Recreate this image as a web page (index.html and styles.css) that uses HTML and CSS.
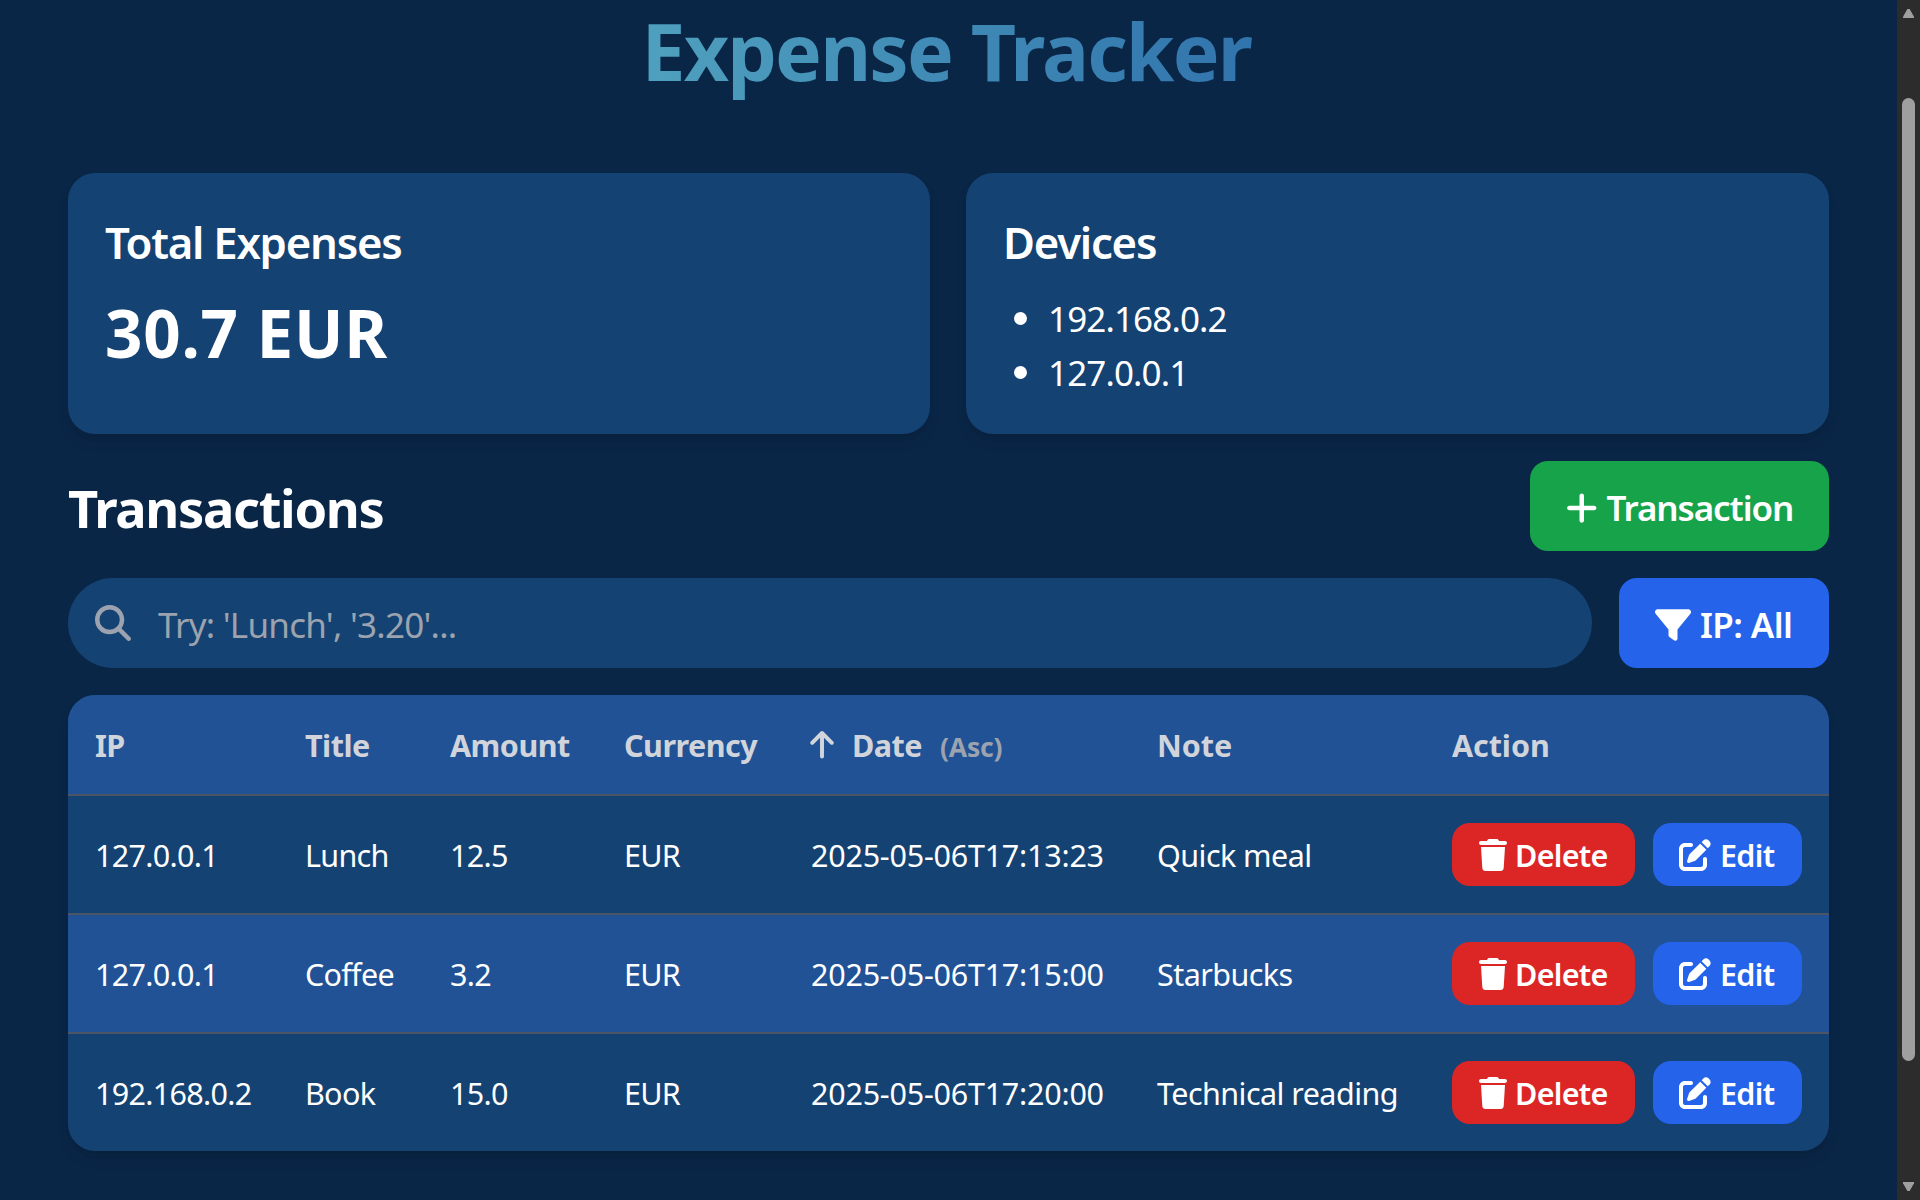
FILE: index.html
```html
<!DOCTYPE html>
<html lang="en">
<head>
    <meta charset="utf-8">
    <title>Expense Tracker</title>
    <meta name="viewport" content="width=device-width,initial-scale=1">
    <link rel="stylesheet" href="styles.css">
</head>
<body>
<!-- Icons -->
<svg class="sprite" width="0" height="0">
    <symbol id="plus" viewBox="0 0 448 512"><path d="M256 80c0-17.7-14.3-32-32-32s-32 14.3-32 32V224H48c-17.7 0-32 14.3-32 32s14.3 32 32 32H192V432c0 17.7 14.3 32 32 32s32-14.3 32-32V288H400c17.7 0 32-14.3 32-32s-14.3-32-32-32H256V80z"/></symbol>
    <symbol id="search" viewBox="0 0 512 512"><path d="M416 208c0 45.9-14.9 88.3-40 122.7L502.6 457.4c12.5 12.5 12.5 32.8 0 45.3s-32.8 12.5-45.3 0L330.7 376c-34.4 25.2-76.8 40-122.7 40C93.1 416 0 322.9 0 208S93.1 0 208 0S416 93.1 416 208zM208 352a144 144 0 1 0 0-288 144 144 0 1 0 0 288z"/></symbol>
    <symbol id="filter" viewBox="0 0 512 512"><path d="M3.9 54.9C10.5 40.9 24.5 32 40 32H472c15.5 0 29.5 8.9 36.1 22.9s4.6 30.5-5.2 42.5L320 320.9V448c0 12.1-6.8 23.2-17.7 28.6s-23.8 4.3-33.5-3l-64-48c-8.1-6-12.8-15.5-12.8-25.6V320.9L9 97.3C-.7 85.4-2.8 68.8 3.9 54.9z"/></symbol>
    <symbol id="arrow-up" viewBox="0 0 384 512"><path d="M214.6 41.4c-12.5-12.5-32.8-12.5-45.3 0l-160 160c-12.5 12.5-12.5 32.8 0 45.3s32.8 12.5 45.3 0L160 141.2V448c0 17.7 14.3 32 32 32s32-14.3 32-32V141.2L329.4 246.6c12.5 12.5 32.8 12.5 45.3 0s12.5-32.8 0-45.3l-160-160z"/></symbol>
    <symbol id="trash" viewBox="0 0 448 512"><path d="M135.2 17.7L128 32H32C14.3 32 0 46.3 0 64S14.3 96 32 96H416c17.7 0 32-14.3 32-32s-14.3-32-32-32H320l-7.2-14.3C307.4 6.8 296.3 0 284.2 0H163.8c-12.1 0-23.2 6.8-28.6 17.7zM416 128H32L53.2 467c1.6 25.3 22.6 45 47.9 45H346.9c25.3 0 46.3-19.7 47.9-45L416 128z"/></symbol>
    <symbol id="edit" viewBox="0 0 512 512"><path d="M471.6 21.7c-21.9-21.9-57.3-21.9-79.2 0L362.3 51.7l97.9 97.9 30.1-30.1c21.9-21.9 21.9-57.3 0-79.2L471.6 21.7zm-299.2 220c-6.1 6.1-10.8 13.6-13.5 21.9l-29.6 88.8c-2.9 8.6-.6 18.1 5.8 24.6s15.9 8.7 24.6 5.8l88.8-29.6c8.2-2.7 15.7-7.4 21.9-13.5L437.7 172.3 339.7 74.3 172.4 241.7zM96 64C43 64 0 107 0 160V416c0 53 43 96 96 96H352c53 0 96-43 96-96V320c0-17.7-14.3-32-32-32s-32 14.3-32 32v96c0 17.7-14.3 32-32 32H96c-17.7 0-32-14.3-32-32V160c0-17.7 14.3-32 32-32h96c17.7 0 32-14.3 32-32s-14.3-32-32-32H96z"/></symbol>
</svg>

<main class="container">
    <h1 class="page-title">Expense Tracker</h1>

    <div class="cards">
        <section class="card">
            <h2 class="card-title">Total Expenses</h2>
            <p class="total">30.7 EUR</p>
        </section>
        <section class="card">
            <h2 class="card-title">Devices</h2>
            <ul class="devices">
                <li>192.168.0.2</li>
                <li>127.0.0.1</li>
            </ul>
        </section>
    </div>

    <div class="section-head">
        <h2 class="section-title">Transactions</h2>
        <button class="btn btn-add"><svg class="icon icon-plus"><use href="#plus"/></svg>Transaction</button>
    </div>

    <div class="search-row">
        <div class="search">
            <svg class="icon"><use href="#search"/></svg>
            <input type="text" placeholder="Try: 'Lunch', '3.20'...">
        </div>
        <button class="btn btn-filter"><svg class="icon"><use href="#filter"/></svg>IP: All</button>
    </div>

    <table class="transactions">
        <colgroup>
            <col class="col-ip"><col class="col-title"><col class="col-amount"><col class="col-currency"><col class="col-date"><col class="col-note"><col>
        </colgroup>
        <thead>
            <tr>
                <th>IP</th>
                <th>Title</th>
                <th>Amount</th>
                <th>Currency</th>
                <th><div class="sort"><svg class="icon icon-arrow"><use href="#arrow-up"/></svg><span>Date</span><span class="order">(Asc)</span></div></th>
                <th class="wide">Note</th>
                <th class="wide">Action</th>
            </tr>
        </thead>
        <tbody>
            <tr>
                <td>127.0.0.1</td>
                <td>Lunch</td>
                <td>12.5</td>
                <td>EUR</td>
                <td class="date">2025-05-06T17:13:23</td>
                <td>Quick meal</td>
                <td>
                    <div class="actions">
                        <button class="btn-sm btn-delete"><svg class="icon icon-trash"><use href="#trash"/></svg>Delete</button>
                        <button class="btn-sm btn-edit"><svg class="icon"><use href="#edit"/></svg>Edit</button>
                    </div>
                </td>
            </tr>
            <tr>
                <td>127.0.0.1</td>
                <td>Coffee</td>
                <td>3.2</td>
                <td>EUR</td>
                <td class="date">2025-05-06T17:15:00</td>
                <td>Starbucks</td>
                <td>
                    <div class="actions">
                        <button class="btn-sm btn-delete"><svg class="icon icon-trash"><use href="#trash"/></svg>Delete</button>
                        <button class="btn-sm btn-edit"><svg class="icon"><use href="#edit"/></svg>Edit</button>
                    </div>
                </td>
            </tr>
            <tr>
                <td>192.168.0.2</td>
                <td>Book</td>
                <td>15.0</td>
                <td>EUR</td>
                <td class="date">2025-05-06T17:20:00</td>
                <td>Technical reading</td>
                <td>
                    <div class="actions">
                        <button class="btn-sm btn-delete"><svg class="icon icon-trash"><use href="#trash"/></svg>Delete</button>
                        <button class="btn-sm btn-edit"><svg class="icon"><use href="#edit"/></svg>Edit</button>
                    </div>
                </td>
            </tr>
        </tbody>
    </table>
</main>

<!-- Scrollbar -->
<div class="scrollbar">
    <div class="arrow arrow-top"></div>
    <div class="track"><div class="thumb"></div></div>
    <div class="arrow arrow-bottom"></div>
</div>
</body>
</html>
```
FILE: styles.css
```css
* {
    box-sizing: border-box;
    margin: 0;
    padding: 0;
}

body {
    display: flex;
    height: 1200px;
    overflow: hidden;
    background: #0a2647;
    color: #fff;
    font-family: "Segoe UI", "Noto Sans", sans-serif;
}

button,
input {
    border: 0;
    font: inherit;
    color: inherit;
}

.sprite {
    display: none;
}

.icon {
    flex: none;
    width: 36px;
    height: 36px;
    fill: currentColor;
}

.container {
    flex: 1;
    padding: 0 68px;
}

.page-title {
    width: 614px;
    margin: 0 auto 59px;
    white-space: nowrap;
    font-size: 78.6px;
    line-height: 102px;
    padding-bottom: 12px;
    letter-spacing: -1.85px;
    background: linear-gradient(to right, #4fa0be, #3174ad);
    background-clip: text;
    -webkit-background-clip: text;
    color: transparent;
}

/* Cards */
.cards {
    display: grid;
    grid-template-columns: 862px 1fr;
    gap: 36px;
    margin-bottom: 27px;
}

.card {
    height: 261px;
    padding: 37px 37px 36px;
    border-radius: 27px;
    background: #144272;
    box-shadow: 0 9px 14px -2px rgba(0, 0, 0, 0.1), 0 5px 9px -5px rgba(0, 0, 0, 0.1);
}

.card-title {
    margin-bottom: 17px;
    font-size: 43.7px;
    font-weight: 600;
    line-height: 65px;
    letter-spacing: -1.25px;
}

.total {
    font-size: 65.5px;
    font-weight: 700;
    line-height: 81px;
    letter-spacing: 0.73px;
}

.devices {
    list-style: none;
    font-size: 35px;
    line-height: 54px;
    letter-spacing: -0.87px;
}

.devices li {
    display: flex;
    align-items: center;
    padding-left: 11px;
}

.devices li::before {
    content: "";
    width: 13px;
    height: 13px;
    margin: 0 21px 2px 0;
    border-radius: 50%;
    background: #fff;
}

/* Transactions header */
.section-head,
.search-row {
    display: flex;
    justify-content: space-between;
    height: 90px;
    margin-bottom: 27px;
}

.section-title {
    padding-top: 2px;
    font-size: 52.4px;
    line-height: 90px;
    letter-spacing: -1.35px;
}

.btn {
    display: flex;
    align-items: center;
    gap: 9px;
    height: 90px;
    padding: 3px 0 0 36px;
    border-radius: 18px;
    white-space: nowrap;
    font-size: 35px;
    font-weight: 600;
}

.btn-add {
    width: 299px;
    background: #16a34a;
    letter-spacing: -1.1px;
}

.btn-filter {
    width: 210px;
    background: #2563eb;
    letter-spacing: -0.6px;
}

.icon-plus {
    width: 31.5px;
}

.search-row {
    gap: 27px;
}

.search {
    display: flex;
    flex: 1;
    align-items: center;
    gap: 27px;
    padding-left: 27px;
    border-radius: 45px;
    background: #144272;
    color: #9ca3af;
}

.search input {
    flex: 1;
    height: 90px;
    padding-top: 3px;
    background: none;
    font-size: 35px;
    letter-spacing: -0.75px;
}

.search input::placeholder {
    color: #9ca3af;
}

/* Table */
.transactions {
    width: 100%;
    table-layout: fixed;
    border-spacing: 0;
    border-radius: 27px;
    overflow: hidden;
    background: #144272;
    font-size: 30.5px;
    letter-spacing: -0.7px;
    text-align: left;
    white-space: nowrap;
    box-shadow: 0 9px 14px -2px rgba(0, 0, 0, 0.1), 0 5px 9px -5px rgba(0, 0, 0, 0.1);
}

.col-ip { width: 210px; }
.col-title { width: 145px; }
.col-amount { width: 174px; }
.col-currency { width: 186px; }
.col-date { width: 347px; }
.col-note { width: 295px; }

.transactions th,
.transactions td {
    padding: 0 0 0 27px;
}

.transactions th {
    height: 101px;
    border-bottom: 2px solid #4b5563;
    background: #205295;
    color: #d1d5db;
    letter-spacing: -0.5px;
}

.transactions th.wide {
    letter-spacing: -0.07px;
}

.transactions td {
    height: 119px;
    border-bottom: 2px solid #4b5563;
}

.transactions tr:last-child td {
    height: 117px;
    border-bottom: 0;
}

.transactions tbody tr:nth-child(even) {
    background: #205295;
}

.transactions td:nth-child(6) {
    letter-spacing: -0.55px;
}

.transactions td.date {
    padding-left: 28px;
    letter-spacing: -0.23px;
}

.sort {
    display: flex;
    align-items: center;
}

.sort .icon-arrow {
    width: 24px;
    height: 31.5px;
    margin-right: 18px;
}

.sort .order {
    margin: 4px 0 0 18px;
    font-size: 26.5px;
    font-weight: 700;
    letter-spacing: -0.2px;
    color: #9ca3af;
}

.actions {
    display: flex;
    gap: 18px;
}

.btn-sm {
    display: flex;
    align-items: center;
    gap: 8px;
    height: 63px;
    padding-left: 27px;
    border-radius: 18px;
    font-size: 30.5px;
    font-weight: 600;
    letter-spacing: -0.7px;
}

.btn-sm .icon {
    width: 32px;
    height: 32px;
}

.btn-sm .icon-trash {
    width: 28px;
}

.btn-delete {
    width: 183px;
    background: #dc2626;
}

.btn-edit {
    width: 149px;
    gap: 9px;
    padding-left: 26px;
    background: #2563eb;
}

/* Scrollbar */
.scrollbar {
    display: flex;
    flex-direction: column;
    align-items: center;
    width: 23px;
    padding: 9px 0;
    background: #2c2c2c;
}

.track {
    flex: 1;
    width: 13px;
    padding-top: 80px;
}

.thumb {
    height: 963px;
    border-radius: 7px;
    background: #9f9f9f;
}

.arrow {
    width: 11px;
    height: 9px;
    background: #9f9f9f;
}

.arrow-top {
    clip-path: polygon(40% 0, 60% 0, 100% 85%, 100% 100%, 0 100%, 0 85%);
}

.arrow-bottom {
    clip-path: polygon(0 0, 100% 0, 100% 15%, 60% 100%, 40% 100%, 0 15%);
}
```
